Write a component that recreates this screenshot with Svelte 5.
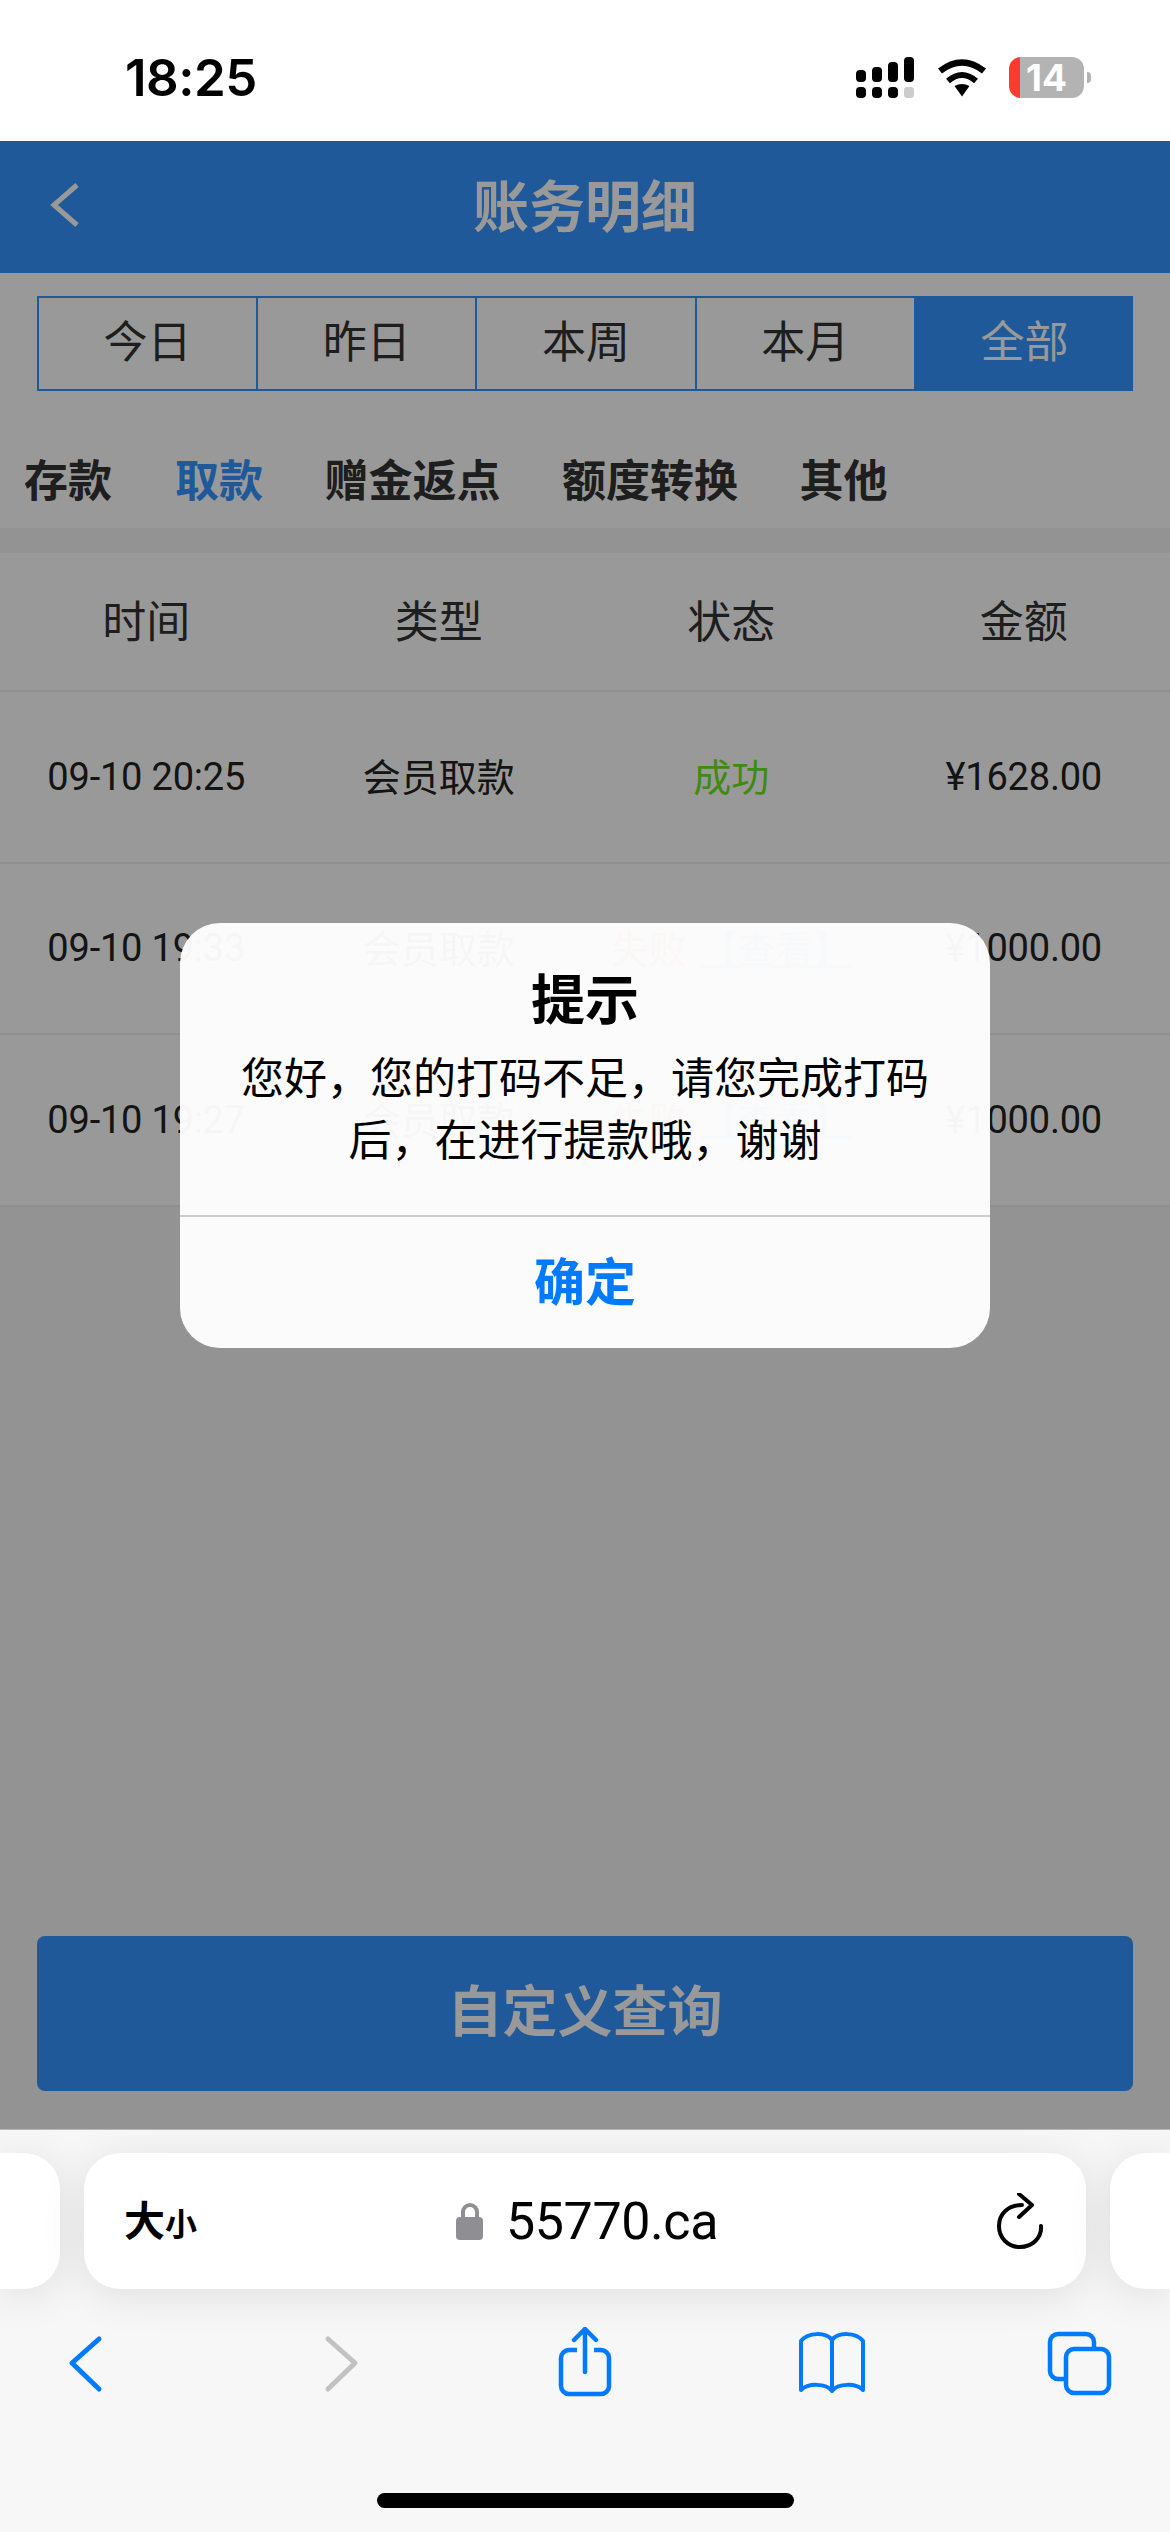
<script>
  const ranges = ['今日', '昨日', '本周', '本月', '全部']
  const kinds = ['存款', '取款', '赠金返点', '额度转换', '其他']
  const heads = ['时间', '类型', '状态', '金额']
  const rows = [
    { time: '09-10 20:25', kind: '会员取款', ok: true, amount: '¥1628.00' },
    { time: '09-10 19:33', kind: '会员取款', ok: false, amount: '¥1000.00' },
    { time: '09-10 19:27', kind: '会员取款', ok: false, amount: '¥1000.00' }
  ]
</script>

<div class="phone">
  <div class="status">
    <span class="clock">18:25</span>
    <div class="status-icons">
      <svg width="58" height="41" viewBox="0 0 58 41" fill="#000">
        <rect x="0" y="13" width="10" height="12" rx="4" />
        <rect x="16" y="10" width="10" height="15" rx="4" />
        <rect x="32" y="5" width="10" height="20" rx="4" />
        <rect x="48" y="0" width="10" height="25" rx="4" />
        <rect x="0" y="30" width="10" height="11" rx="4" />
        <rect x="16" y="30" width="10" height="11" rx="4" />
        <rect x="32" y="30" width="10" height="11" rx="4" />
        <rect x="48" y="30" width="10" height="11" rx="3" fill="#ccc" />
      </svg>
      <svg width="50" height="38" viewBox="0 0 50 38">
        <path d="M3 12Q25-5 47 12" fill="none" stroke="#000" stroke-width="6.5" />
        <path d="M11 22Q25 10 39 22" fill="none" stroke="#000" stroke-width="6" />
        <path d="M17.500 27Q25 23 32.500 27L25 37.500Z" fill="#000" />
      </svg>
      <div class="battery"><span>14</span></div>
      <div class="nub"></div>
    </div>
  </div>

  <div class="page">
    <header class="title-bar">
      <svg width="34" height="50" viewBox="0 0 34 50"><path d="M29 3 6 23l23 20" fill="none" stroke="#fff" stroke-width="5" /></svg>
      <h1>账务明细</h1>
      <span></span>
    </header>

    <div class="filters">
      <div class="ranges">
        {#each ranges as r, i}
          <div class="range" class:on={i === 4}>{r}</div>
        {/each}
      </div>

      <div class="kinds">
        {#each kinds as k, i}
          <span class:on={i === 1}>{k}</span>
        {/each}
      </div>
    </div>

    <div class="table">
      <div class="row head">
        {#each heads as h}<div>{h}</div>{/each}
      </div>
      {#each rows as row}
        <div class="row">
          <div>{row.time}</div>
          <div class="cjk">{row.kind}</div>
          <div class="cjk">
            {#if row.ok}
              <span class="ok">成功</span>
            {:else}
              <span class="bad">失败</span><span class="link">【查看】</span>
            {/if}
          </div>
          <div>{row.amount}</div>
        </div>
      {/each}
    </div>

    <button class="query">自定义查询</button>

    <div class="mask">
      <div class="alert">
        <div class="alert-body">
          <h2>提示</h2>
          <p>您好，您的打码不足，请您完成打码后，在进行提款哦，谢谢</p>
        </div>
        <div class="alert-ok">确定</div>
      </div>
    </div>
  </div>

  <div class="safari">
    <div class="address-row">
      <div class="side left"></div>
      <div class="address">
        <div class="aa"><span class="big">大</span><span class="small">小</span></div>
        <div class="url">
          <svg width="28" height="38" viewBox="0 0 28 38">
            <path d="M7 16V10a7 7 0 0 1 14 0v6" fill="none" stroke="#8e8e93" stroke-width="4" />
            <rect x="0" y="15" width="27" height="23" rx="4" fill="#8e8e93" />
          </svg>
          <span>55770.ca</span>
        </div>
        <svg class="reload" width="50" height="56" viewBox="0 0 50 56" fill="none" stroke="#000" stroke-width="4" stroke-linecap="round" stroke-linejoin="round">
          <path d="M46 33c1 12-9 21-21 21C13 54 4 45 4 33c0-12 9-21 23-21" />
          <path d="M24 1l13 11-13 12" />
        </svg>
      </div>
      <div class="side right"></div>
    </div>

    <div class="tools">
      <svg width="80" height="72" viewBox="0 0 80 72" fill="none" stroke="#007aff" stroke-width="5" stroke-linecap="round" stroke-linejoin="round">
        <path d="M50 12 23 36l27 26" />
      </svg>
      <svg width="80" height="72" viewBox="0 0 80 72" fill="none" stroke="#c2c2c2" stroke-width="5" stroke-linecap="round" stroke-linejoin="round">
        <path d="M32 12l27 24-27 26" />
      </svg>
      <svg width="80" height="72" viewBox="0 0 80 72" fill="none" stroke="#007aff" stroke-width="4.500" stroke-linecap="round" stroke-linejoin="round">
        <path d="M34 23h-8a8 8 0 0 0-8 8v28a8 8 0 0 0 8 8h32a8 8 0 0 0 8-8V31a8 8 0 0 0-8-8h-7" stroke-linecap="butt" />
        <path d="M42 45V2M31 13 42 2l11 11" />
      </svg>
      <svg width="80" height="72" viewBox="0 0 80 72" fill="none" stroke="#007aff" stroke-width="4" stroke-linecap="round" stroke-linejoin="round">
        <path d="M42 13C36 5 18 5 11 14v49c7-7 25-7 31 1 6-8 24-8 31-1V14C66 5 48 5 42 13v51" />
      </svg>
      <svg width="80" height="72" viewBox="0 0 80 72" fill="none" stroke="#007aff" stroke-width="4.500" stroke-linejoin="round">
        <path d="M29 52h-8a8 8 0 0 1-8-8V15a8 8 0 0 1 8-8h28a8 8 0 0 1 8 8v7" />
        <rect x="29" y="22" width="43" height="44" rx="8" />
      </svg>
    </div>

    <div class="home-bar"></div>
  </div>
</div>

<style>
  :global(body) {
    margin: 0;
    background: #fff;
  }

  .phone {
    width: 1170px;
    height: 2532px;
    display: flex;
    flex-direction: column;
    overflow: hidden;
    font-family: "Noto Sans CJK SC", sans-serif;
  }

  .status {
    height: 141px;
    flex: none;
    display: flex;
    align-items: center;
    justify-content: space-between;
    padding: 14px 79px 0 125px;
    box-sizing: border-box;
    background: #fff;
  }

  .clock {
    font-family: Inter, sans-serif;
    font-weight: 600;
    font-size: 51px;
    letter-spacing: -0.5px;
    color: #000;
  }

  .status-icons {
    display: flex;
    align-items: center;
  }

  .status-icons svg + svg {
    margin-left: 23px;
  }

  .battery {
    width: 75px;
    height: 41px;
    margin-left: 22px;
    border-radius: 12px;
    background: linear-gradient(to right, #ff3b30 11px, #b3b3b3 11px);
    color: #fff;
    font-family: Inter, sans-serif;
    font-weight: 700;
    font-size: 37px;
    line-height: 41px;
    text-align: center;
  }

  .nub {
    width: 4px;
    height: 11px;
    margin-left: 3px;
    border-radius: 0 6px 6px 0;
    background: #b3b3b3;
  }

  .page {
    flex: 1;
    position: relative;
    display: flex;
    flex-direction: column;
    background: #f5f5f5;
  }

  .title-bar {
    height: 132px;
    flex: none;
    display: grid;
    grid-template-columns: 1fr auto 1fr;
    align-items: center;
    padding: 0 48px;
    background: #3495ff;
    color: #fff;
  }

  .title-bar h1 {
    margin: 0 0 10px;
    font-size: 56px;
    font-weight: 700;
  }

  .filters {
    background: #fff;
    padding-top: 23px;
  }

  .ranges {
    display: grid;
    grid-template-columns: repeat(5, 1fr);
    height: 95px;
    margin: 0 37px;
  }

  .range {
    display: flex;
    align-items: center;
    justify-content: center;
    box-sizing: border-box;
    padding-bottom: 10px;
    font-size: 44px;
    color: #333;
    border: 2px solid #3495ff;
    border-right: 0;
  }

  .range.on {
    background: #3495ff;
    color: #fff;
  }

  .kinds {
    height: 137px;
    box-sizing: border-box;
    display: flex;
    align-items: center;
    gap: 61.500px;
    padding: 36px 24px 0;
    font-size: 44px;
    font-weight: 700;
    color: #333;
  }

  .kinds span:first-child {
    margin-right: 1.500px;
  }

  .kinds .on {
    color: #3495ff;
  }

  .table {
    margin-top: 25px;
    background: #fff;
  }

  .row {
    height: 171.500px;
    box-sizing: border-box;
    display: grid;
    grid-template-columns: repeat(4, 1fr);
    align-items: center;
    text-align: center;
    border-bottom: 2px solid #eee;
    font-family: Roboto, "Noto Sans CJK SC", sans-serif;
    font-size: 38px;
    letter-spacing: -0.2px;
    color: #222;
  }

  .row .cjk {
    letter-spacing: 0;
    padding-bottom: 4px;
  }

  .row.head {
    height: 139px;
    padding-bottom: 6px;
    font-family: "Noto Sans CJK SC", sans-serif;
    font-size: 44px;
    letter-spacing: 0;
    color: #333;
  }

  .ok {
    color: #69e61b;
  }

  .bad {
    color: #ff3b30;
    margin-right: 13px;
  }

  .link {
    color: #3495ff;
    text-decoration: underline;
  }

  .query {
    display: block;
    margin: auto 37px 38px;
    height: 155px;
    padding: 0 0 14px;
    border: 0;
    border-radius: 8px;
    background: #3495ff;
    color: #fff;
    font-family: inherit;
    font-size: 55px;
    font-weight: 700;
  }

  .mask {
    position: absolute;
    inset: 0;
    display: flex;
    align-items: center;
    justify-content: center;
    background: rgba(0, 0, 0, 0.4);
  }

  .alert {
    width: 810px;
    border-radius: 40px;
    background: rgba(254, 254, 254, 0.97);
    text-align: center;
    color: #000;
  }

  .alert-body {
    padding: 37px 60px 47px;
    border-bottom: 2px solid #ccc;
  }

  .alert h2 {
    margin: 0 0 10px;
    font-size: 54px;
    line-height: 74px;
    font-weight: 700;
  }

  .alert p {
    margin: 0;
    font-size: 43px;
    line-height: 62px;
  }

  .alert-ok {
    height: 131px;
    line-height: 125px;
    color: #007aff;
    font-size: 51px;
    font-weight: 700;
  }

  .safari {
    flex: none;
    height: 403px;
    box-sizing: border-box;
    border-top: 1px solid #b8b8b8;
    padding-top: 23px;
    background: #f7f7f8;
  }

  .address-row {
    display: flex;
    gap: 24px;
  }

  .side {
    width: 60px;
    flex: none;
    background: #fff;
    box-shadow: 0 6px 44px rgba(0, 0, 0, 0.1);
  }

  .side.left {
    border-radius: 0 36px 36px 0;
  }

  .side.right {
    border-radius: 36px 0 0 36px;
  }

  .address {
    flex: 1;
    height: 136px;
    display: grid;
    grid-template-columns: 1fr auto 1fr;
    align-items: center;
    padding: 0 41px;
    background: #fff;
    border-radius: 36px;
    box-shadow: 0 6px 44px rgba(0, 0, 0, 0.1);
  }

  .aa {
    color: #000;
    font-weight: 700;
    line-height: 1;
    margin-left: -1px;
    margin-bottom: 6px;
  }

  .big {
    font-size: 41px;
  }

  .small {
    font-size: 32px;
  }

  .url {
    display: flex;
    align-items: center;
    gap: 22px;
    margin-left: 4px;
    font-family: Roboto, sans-serif;
    font-size: 52px;
    letter-spacing: -0.4px;
    color: #000;
  }

  .reload {
    justify-self: end;
  }

  .tools {
    display: flex;
    gap: 167px;
    margin-top: 38px;
    padding-left: 49px;
  }

  .tools svg {
    display: block;
    flex: none;
  }

  .home-bar {
    width: 417px;
    height: 15px;
    margin: 94px auto 0;
    border-radius: 8px;
    background: #000;
  }
</style>
